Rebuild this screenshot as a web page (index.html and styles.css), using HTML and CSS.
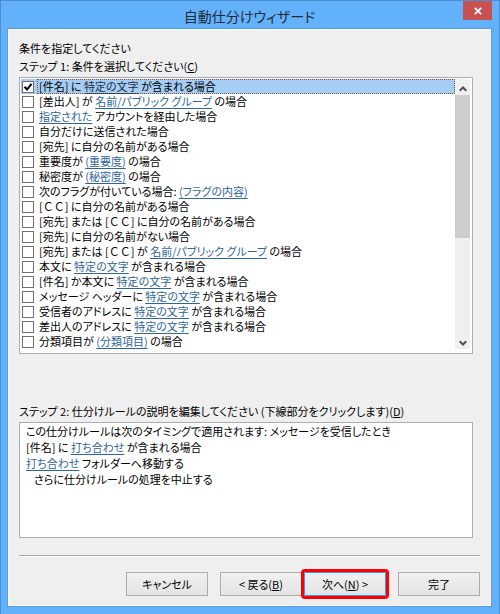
FILE: index.html
```html
<!DOCTYPE html>
<html lang="ja">
<head>
    <meta charset="UTF-8">
    <meta name="viewport" content="width=device-width, initial-scale=1.0">
    <title>自動仕分けウィザード</title>
    <link rel="stylesheet" href="styles.css">
</head>
<body>
    <div class="window">
        <!-- Title Bar -->
        <div class="title-bar">
            <h1>自動仕分けウィザード</h1>
            <button type="button" class="close-btn" aria-label="閉じる">
                <svg width="8" height="8" viewBox="0 0 8 8"><path d="M0.8 0.8L7.2 7.2M7.2 0.8L0.8 7.2" stroke="#fff" stroke-width="1.8"/></svg>
            </button>
        </div>
        <form class="client">
            <p class="caption">条件を指定してください</p>
            <p class="caption" id="step1">ステップ 1: 条件を選択してください(<u>C</u>)</p>
            <!-- Condition List -->
            <div class="list-box" role="group" aria-labelledby="step1">
                <ul class="conditions">
                    <li class="selected"><input type="checkbox" id="c1" checked><label for="c1">[件名] に <a href="#">特定の文字</a> が含まれる場合</label></li>
                    <li><input type="checkbox" id="c2"><label for="c2">[差出人] が <a href="#">名前/パブリック グループ</a> の場合</label></li>
                    <li><input type="checkbox" id="c3"><label for="c3"><a href="#">指定された</a> アカウントを経由した場合</label></li>
                    <li><input type="checkbox" id="c4"><label for="c4">自分だけに送信された場合</label></li>
                    <li><input type="checkbox" id="c5"><label for="c5">[宛先] に自分の名前がある場合</label></li>
                    <li><input type="checkbox" id="c6"><label for="c6">重要度が <a href="#">(重要度)</a> の場合</label></li>
                    <li><input type="checkbox" id="c7"><label for="c7">秘密度が <a href="#">(秘密度)</a> の場合</label></li>
                    <li><input type="checkbox" id="c8"><label for="c8">次のフラグが付いている場合: <a href="#">(フラグの内容)</a></label></li>
                    <li><input type="checkbox" id="c9"><label for="c9">[<span class="wide">ＣＣ</span>] に自分の名前がある場合</label></li>
                    <li><input type="checkbox" id="c10"><label for="c10">[宛先] または [<span class="wide">ＣＣ</span>] に自分の名前がある場合</label></li>
                    <li><input type="checkbox" id="c11"><label for="c11">[宛先] に自分の名前がない場合</label></li>
                    <li><input type="checkbox" id="c12"><label for="c12">[宛先] または [<span class="wide">ＣＣ</span>] が <a href="#">名前/パブリック グループ</a> の場合</label></li>
                    <li><input type="checkbox" id="c13"><label for="c13">本文に <a href="#">特定の文字</a> が含まれる場合</label></li>
                    <li><input type="checkbox" id="c14"><label for="c14">[件名] か本文に <a href="#">特定の文字</a> が含まれる場合</label></li>
                    <li><input type="checkbox" id="c15"><label for="c15">メッセージ ヘッダーに <a href="#">特定の文字</a> が含まれる場合</label></li>
                    <li><input type="checkbox" id="c16"><label for="c16">受信者のアドレスに <a href="#">特定の文字</a> が含まれる場合</label></li>
                    <li><input type="checkbox" id="c17"><label for="c17">差出人のアドレスに <a href="#">特定の文字</a> が含まれる場合</label></li>
                    <li><input type="checkbox" id="c18"><label for="c18">分類項目が <a href="#">(分類項目)</a> の場合</label></li>
                </ul>
                <div class="scrollbar">
                    <button type="button" aria-label="上へ">
                        <svg width="8" height="6" viewBox="0 0 8 6"><path d="M0.7 4.8L4 1.5L7.3 4.8" fill="none" stroke="#505050" stroke-width="2"/></svg>
                    </button>
                    <div class="track"><div class="thumb"></div></div>
                    <button type="button" aria-label="下へ">
                        <svg width="8" height="6" viewBox="0 0 8 6"><path d="M0.7 1.2L4 4.5L7.3 1.2" fill="none" stroke="#505050" stroke-width="2"/></svg>
                    </button>
                </div>
            </div>
            <!-- Rule Description -->
            <p class="caption step2">ステップ 2: 仕分けルールの説明を編集してください (下線部分をクリックします)(<u>D</u>)</p>
            <div class="description">
                <p>この仕分けルールは次のタイミングで適用されます: メッセージを受信したとき</p>
                <p>[件名] に <a href="#">打ち合わせ</a> が含まれる場合</p>
                <p><a href="#">打ち合わせ</a> フォルダーへ移動する</p>
                <p class="indent">さらに仕分けルールの処理を中止する</p>
            </div>
            <!-- Buttons -->
            <div class="buttons">
                <button type="button">キャンセル</button>
                <div class="nav-buttons">
                    <button type="button">&lt; 戻る(<u>B</u>)</button>
                    <button type="button" class="next">次へ(<u>N</u>) &gt;</button>
                </div>
                <button type="button">完了</button>
            </div>
        </form>
    </div>
</body>
</html>
```
FILE: styles.css
```css
* {
    box-sizing: border-box;
}
body {
    margin: 0;
    font-family: "Noto Sans CJK JP", sans-serif;
    font-feature-settings: "palt";
    font-size: 11px;
    line-height: 16px;
    color: #000;
}
p, ul, h1 {
    margin: 0;
    padding: 0;
}
button {
    font: inherit;
    font-feature-settings: inherit;
    color: inherit;
    padding: 0;
}
a {
    color: #2f659c;
    text-underline-offset: 2px;
}
.window {
    display: flex;
    flex-direction: column;
    min-height: 100vh;
    padding: 0 7px 7px 6px;
    background: #64b1fb;
    border: 1px solid #4a8fcf;
}
/* Title Bar */
.title-bar {
    position: relative;
    height: 27px;
    text-align: center;
}
.title-bar h1 {
    font-size: 14px;
    font-weight: normal;
    line-height: 30px;
    color: #1e2c3a;
}
.close-btn {
    position: absolute;
    top: 0;
    right: 0;
    display: flex;
    align-items: center;
    justify-content: center;
    width: 29px;
    height: 19px;
    border: none;
    background: #c75050;
}
.client {
    flex: 1;
    padding: 10px 11px;
    background: #efefef;
    border: 1px solid #559ee3;
    box-shadow: inset 0 0 0 1px #fafafa;
}
.caption {
    line-height: 18px;
    white-space: nowrap;
}
/* Condition List */
.list-box {
    display: flex;
    margin: 2px 7px 0 0;
    padding: 1px 2px 4px 1px;
    background: #fff;
    border: 1px solid #abadb3;
}
.conditions {
    flex: 1;
    list-style: none;
}
.conditions li {
    display: flex;
    align-items: center;
    height: 15px;
    padding-left: 1px;
    white-space: nowrap;
}
.conditions input {
    appearance: none;
    width: 12px;
    height: 12px;
    margin: 0 3px 0 0;
    background: #fff;
    border: 1px solid #707070;
}
.conditions input:checked {
    background: #fff url("data:image/svg+xml,%3Csvg xmlns='http://www.w3.org/2000/svg' viewBox='0 0 10 10'%3E%3Cpath d='M1.5 4.8L4 7.5L8.6 1.8' fill='none' stroke='%23000' stroke-width='2'/%3E%3C/svg%3E");
}
.conditions label {
    flex: 1;
    height: 15px;
    padding-left: 2px;
    line-height: 15px;
}
.conditions .selected {
    background: #a6cdf3;
}
.selected label {
    outline: 1px dotted #7b5a3c;
    outline-offset: -1px;
}
.selected a {
    color: #1b2f4a;
}
.wide {
    font-feature-settings: normal;
}
.scrollbar {
    display: flex;
    flex-direction: column;
    width: 15px;
    background: #f0f0f0;
}
.scrollbar button {
    height: 16px;
    border: none;
    background: none;
    line-height: 10px;
}
.track {
    flex: 1;
}
.thumb {
    height: 60%;
    background: #cdcdcd;
}
/* Rule Description */
.step2 {
    margin-top: 48px;
}
.description {
    height: 116px;
    margin: 2px 7px 0 0;
    padding: 0 6px;
    background: #fff;
    border: 1px solid #abadb3;
    white-space: nowrap;
}
.description .indent {
    padding-left: 8px;
}
/* Buttons */
.buttons {
    display: flex;
    justify-content: flex-end;
    gap: 12px;
    margin-top: 17px;
    padding-top: 16px;
    border-top: 1px solid #a8a8a8;
    box-shadow: inset 0 1px #fff;
}
.nav-buttons {
    display: flex;
    gap: 2px;
}
.buttons button {
    width: 82px;
    height: 24px;
    background: linear-gradient(#f0f0f0, #e4e4e4);
    border: 1px solid #acacac;
}
.buttons .next {
    border-color: #3399ff;
    outline: 3px solid #ff0000;
    border-radius: 1px;
}
```
